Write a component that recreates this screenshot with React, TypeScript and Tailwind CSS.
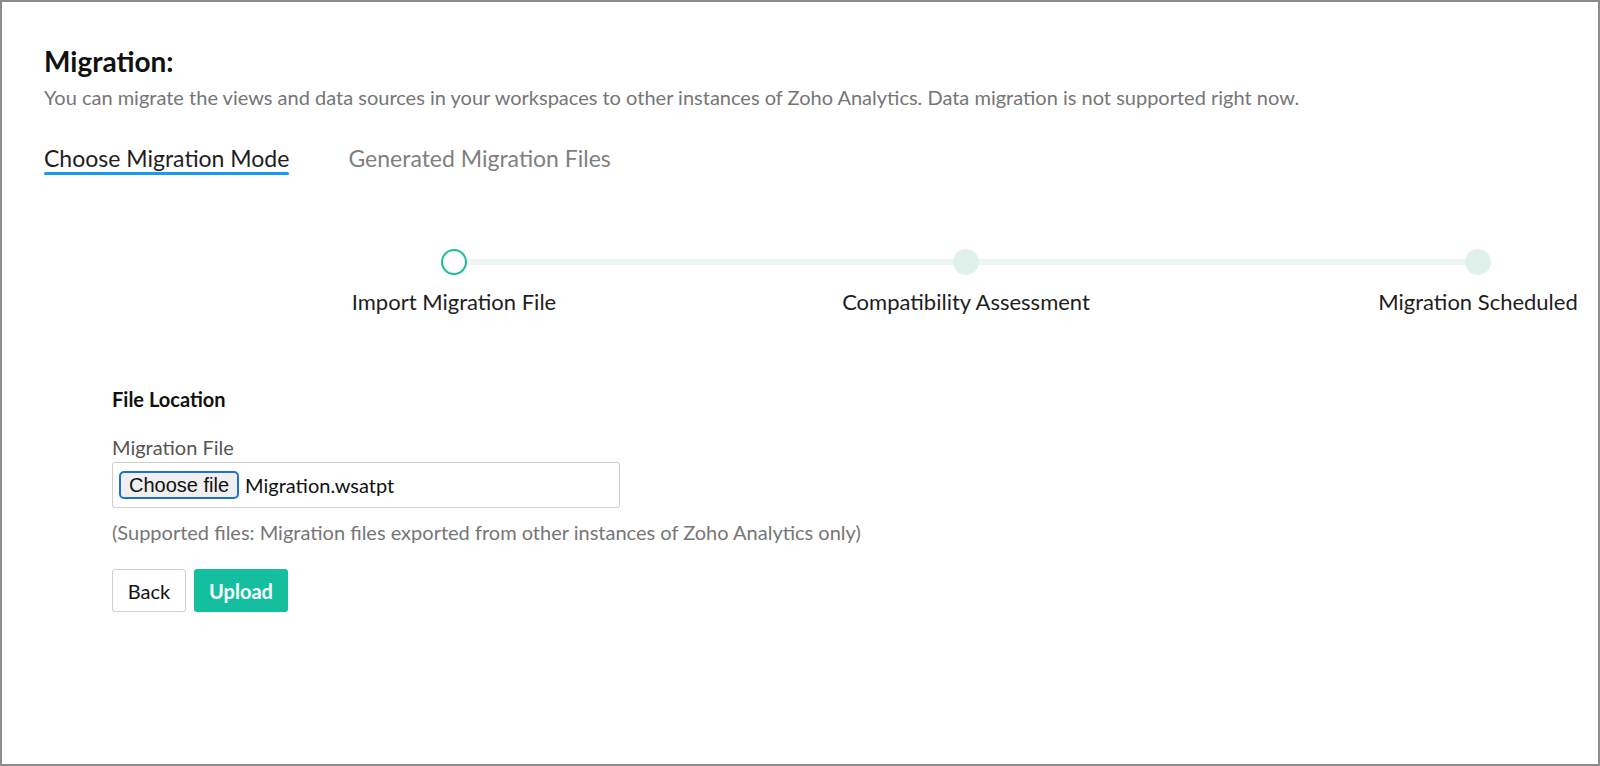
import React from 'react';

const steps = ['Import Migration File', 'Compatibility Assessment', 'Migration Scheduled'];

function Stepper() {
  return (
    <div className="relative ml-[154px] mt-[74px] flex w-[1536px] shrink-0">
      {/* connector line between first and last step */}
      <div className="absolute left-[256px] right-[256px] top-[10px] h-[6px] bg-[#edf6f3]" />
      {steps.map((label, i) => (
        <div key={label} className="relative flex w-[512px] shrink-0 flex-col items-center">
          {i === 0 ? (
            <div className="h-[26px] w-[26px] rounded-full border-2 border-[#1dbb9b] bg-white" />
          ) : (
            <div className="h-[26px] w-[26px] rounded-full bg-[#e0f1eb]" />
          )}
          <div className="mt-[14px] whitespace-nowrap text-[22px] leading-[26px] text-[#1e1e1e]">{label}</div>
        </div>
      ))}
    </div>
  );
}

export default function App() {
  return (
    <div className="h-[766px] w-[1600px] overflow-hidden border-2 border-[#8c8c8c] bg-white font-['Lato',sans-serif]">
      <div className="pl-[42px] pt-[44px]">
        <h1 className="text-[28px] font-bold leading-[30px] text-[#111]">Migration:</h1>
        <p className="mt-[9px] whitespace-nowrap text-[20px] leading-[24px] text-[#767676]">
          You can migrate the views and data sources in your workspaces to other instances of Zoho Analytics. Data migration is not supported right now.
        </p>

        <div className="mt-[35px] flex gap-[59px]">
          <div className="flex flex-col">
            <span className="text-[23px] leading-[28px] text-[#1e1e1e]">Choose Migration Mode</span>
            <span className="h-[3px] rounded-full bg-[#1a9bf0]" />
          </div>
          <span className="text-[23px] leading-[28px] text-[#7f7f7f]">Generated Migration Files</span>
        </div>

        <Stepper />

        <div className="ml-[68px] mt-[72px]">
          <div className="text-[20px] font-bold leading-[24px] text-[#111]">File Location</div>
          <div className="mt-[24px] text-[20px] leading-[24px] text-[#555]">Migration File</div>
          <div className="mt-[3px] flex h-[46px] w-[508px] items-center rounded-[3px] border border-[#cfcfcf] px-[6px]">
            <button className="h-[28px] rounded-[5px] border-2 border-[#1f6fd8] bg-[#efefef] px-[8px] font-['Liberation_Sans',sans-serif] text-[20px] leading-none text-[#111]">
              Choose file
            </button>
            <span className="ml-[6px] text-[20px] text-[#111]">Migration.wsatpt</span>
          </div>
          <div className="mt-[12px] whitespace-nowrap text-[20px] leading-[24px] text-[#767676]">
            (Supported files: Migration files exported from other instances of Zoho Analytics only)
          </div>
          <div className="mt-[25px] flex gap-[8px]">
            <button className="h-[43px] w-[74px] rounded-[3px] border border-[#cfcfcf] bg-white text-[20px] text-[#111]">Back</button>
            <button className="h-[43px] w-[94px] rounded-[3px] bg-[#14bf9f] text-[20px] font-bold text-white">Upload</button>
          </div>
        </div>
      </div>
    </div>
  );
}
